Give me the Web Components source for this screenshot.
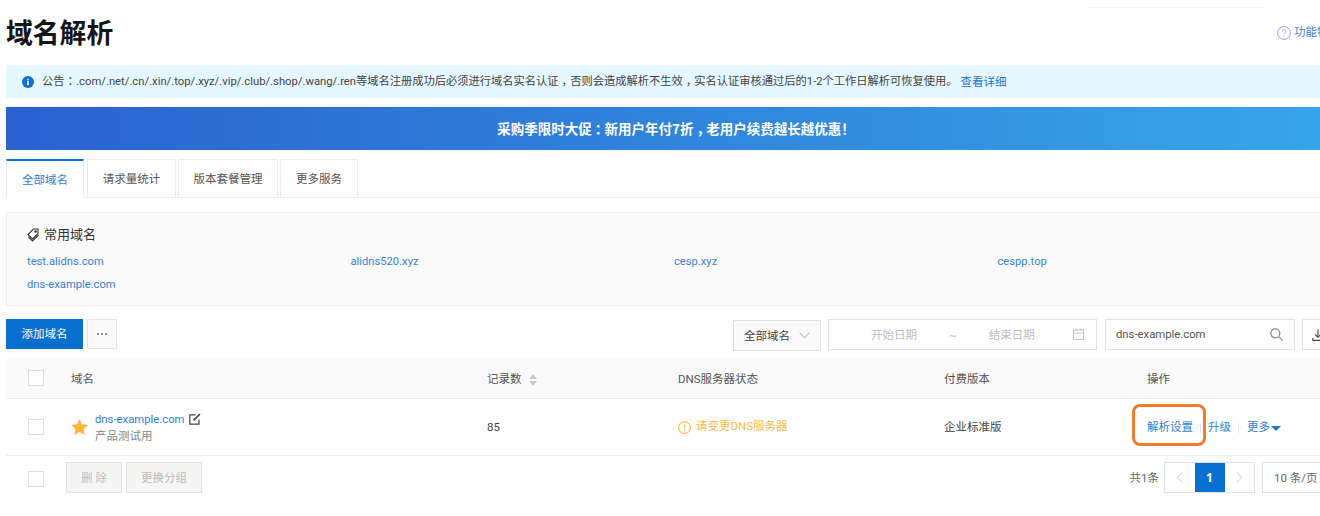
<!DOCTYPE html>
<html lang="zh"><head><meta charset="utf-8"><title>域名解析</title>
<style>
html,body{margin:0;background:#fff;overflow:hidden}
body{width:1320px;height:516px;font:11.5px/1.5 Roboto,"Noto Sans CJK SC",sans-serif;color:#333}
</style></head><body>
<dns-page>
  <page-header></page-header>
  <notice-bar></notice-bar>
  <promo-banner></promo-banner>
  <tab-bar></tab-bar>
  <fav-domains></fav-domains>
  <domain-toolbar></domain-toolbar>
  <domain-table></domain-table>
</dns-page>
<script>
const base=`:host,*{box-sizing:border-box} a{color:#2f78d0;text-decoration:none} svg{display:block;flex:none} .p{font-feature-settings:"halt";padding:0 3px}`;
function def(name,css,html){
  customElements.define(name,class extends HTMLElement{
    constructor(){super();this.attachShadow({mode:'open'}).innerHTML=`<style>${base}${css}</style>${html}`;}
  });
}
def('dns-page',`:host{display:block;width:1334px;margin-left:6px}`,`<slot></slot>`);

def('page-header',`
:host{display:block;height:65px;position:relative}
.rule{position:absolute;left:1082px;top:7px;width:175px;height:1px;background:#f5f5f5}
.row{display:flex;justify-content:space-between;padding-top:13px;height:65px}
h1{margin:0;font:700 26.8px/38px "Noto Sans CJK SC",sans-serif;color:#151515}
a{display:flex;align-items:center;gap:3px;height:40px;color:#3f7fd0;white-space:nowrap}
`,`<div class="rule"></div><div class="row"><h1>域名解析</h1>
<a href="#"><svg width="14" height="14" viewBox="0 0 14 14" fill="none" stroke="#8fa9dc"><circle cx="7" cy="7" r="6.4"/><path d="M5.3 5.5c0-2.2 3.5-2.2 3.5 0 0 1.3-1.8 1.3-1.8 2.8M7 9.6v1.2"/></svg>功能特性</a></div>`);

def('notice-bar',`
:host{display:flex;align-items:center;height:33px;background:#e5f7ff;padding:2px 0 0 16px;color:#444;white-space:nowrap;margin-bottom:9px;font-size:11.25px}
svg{margin:-2px 8px 0 0}
a{color:#1a78d0;margin-left:3px;font-size:11.5px}
`,`<svg width="12" height="12" viewBox="0 0 12 12"><circle cx="6" cy="6" r="6" fill="#0a6fd0"/><rect x="5.2" y="5" width="1.6" height="4.2" fill="#fff"/><rect x="5.2" y="2.8" width="1.6" height="1.5" fill="#fff"/></svg>
<span>公告<span class="p">：</span>.com/.net/.cn/.xin/.top/.xyz/.vip/.club/.shop/.wang/.ren等域名注册成功后必须进行域名实名认证<span class="p">，</span>否则会造成解析不生效<span class="p">，</span>实名认证审核通过后的1-2个工作日解析可恢复使用。</span><a href="#">查看详细</a>`);

def('promo-banner',`
:host{display:flex;align-items:center;justify-content:center;height:43px;margin-bottom:9px;padding:0 0 2px 6px;color:#fff;font:700 13.5px "Noto Sans CJK SC",sans-serif;background:linear-gradient(90deg,#2a62cf,#37a6e9)}
`,`<span>采购季限时大促<span class="p">：</span>新用户年付7折<span class="p">，</span>老用户续费越长越优惠！</span>`);

def('tab-bar',`
:host{display:flex;height:39px;border-bottom:1px solid #ebebeb;margin-bottom:14px;white-space:nowrap}
span{display:flex;align-items:center;justify-content:center;height:38px;padding-top:2px;border:1px solid #ebebeb;border-bottom:0;color:#555;margin-right:2px}
.on{width:78px;margin-right:3px;border-top:2px solid #0a70d2;color:#2f7dd3;height:39px;background:#fff;border-left:1px solid #ebebeb}
`,`<span class="on">全部域名</span><span style="width:89px">请求量统计</span><span style="width:100px">版本套餐管理</span><span style="width:78px">更多服务</span>`);

def('fav-domains',`
:host{display:block;height:94px;background:#fafafa;border:1px solid #f0f0f0;padding:11px 0 0 20px;margin-bottom:13px}
.t{display:flex;align-items:center;gap:5px;height:22px;font-size:13px;color:#333;margin-bottom:5px}
.g{display:grid;grid-template-columns:repeat(4,323.5px);grid-auto-rows:23px;align-items:center;font-size:11.2px}
a{color:#3a7fd2}
`,`<div class="t"><svg width="12" height="14" viewBox="0 0 12 14" fill="none" stroke="#333" stroke-width="1.1"><path d="M6.5 1H11v4.5L5.5 11 1 6.5z"/><path d="M1.2 8.6 5.5 13l6-6"/><circle cx="8.6" cy="3.4" r=".7"/></svg>常用域名</div>
<div class="g"><a href="#">test.alidns.com</a><a href="#">alidns520.xyz</a><a href="#">cesp.xyz</a><a href="#">cespp.top</a><a href="#">dns-example.com</a></div>`);

def('domain-toolbar',`
:host{display:flex;align-items:flex-start;height:39px;white-space:nowrap;padding-right:6px}
.add{width:77px;height:30px;padding-top:2px;background:#0a70d0;color:#fff;display:flex;align-items:center;justify-content:center;margin-right:4px}
.more{width:30px;height:30px;border:1px solid #e2e2e2;background:#fafafa;display:flex;align-items:center;justify-content:center;gap:2px}
.more i{width:2px;height:2px;border-radius:50%;background:#666}
.r{margin-left:auto;display:flex;gap:7px;align-items:flex-start}
.sel,.date,.q{height:31px;padding-top:2px;display:flex;align-items:center;border:1px solid #e2e2e2}
.sel svg,.date svg,.q svg{margin-top:-3px}
.sel{width:88px;margin-top:1px;background:#fafafa;justify-content:space-between;padding-left:10px;padding-right:10px;color:#444}
.date{width:269px;color:#bdbdbd;padding-left:42px;margin-right:1px}
.date span:nth-child(2){margin:0 32px 0 32px}
.date svg{margin-left:38px}
.q{width:190px;justify-content:space-between;padding-left:10px;padding-right:11px;color:#555}
.q span{font-size:11.3px}
.dl{width:32px;height:31px;border:1px solid #e2e2e2;display:flex;align-items:center;justify-content:center}
`,`<div class="add">添加域名</div><div class="more"><i></i><i></i><i></i></div>
<div class="r"><div class="sel">全部域名<svg width="11" height="7" viewBox="0 0 11 7" fill="none" stroke="#aaa"><path d="M.7.7 5.5 6 10.3.7"/></svg></div>
<div class="date"><span>开始日期</span><span>~</span><span>结束日期</span><svg width="11" height="12" viewBox="0 0 11 12" fill="none" stroke="#c4c4c4"><rect x=".5" y="2" width="10" height="9.5"/><path d="M.5 5h10M3 .5V3M8 .5V3"/></svg></div>
<div class="q"><span>dns-example.com</span><svg width="13" height="13" viewBox="0 0 13 13" fill="none" stroke="#888" stroke-width="1.2"><circle cx="5.3" cy="5.3" r="4.5"/><path d="m8.6 8.6 4 4"/></svg></div>
<div class="dl"><svg width="12" height="12" viewBox="0 0 12 12" fill="none" stroke="#444" stroke-width="1.1"><path d="M6 .5v7.5M3 5.3 6 8.3l3-3M.8 9v2.4h10.4V9"/></svg></div></div>`);

def('check-box',`:host{display:block;width:16px;height:16px;border:1px solid #dcdcdc;background:#fff}`,``);

def('domain-table',`
:host{display:block;color:#444}
.grid{display:grid;grid-template-columns:65px 416px 191px 266px 203px 193px;align-items:center}
.cb{padding-left:22px}
.head{height:41px;background:#fafafa;border-bottom:1px solid #ececf2;color:#555}
.head>div:not(.cb){padding-top:3px}
.body{height:57px;border-bottom:1px solid #ececf2}
.body>div:not(.cb):not(.warn){padding-top:2px}
.sort{display:inline-flex;flex-direction:column;gap:2px;vertical-align:middle;margin-left:7px}
.sort i{width:0;height:0;border:4.5px solid transparent}
.sort i:first-child{border-top:0;border-bottom:5px solid #c8c8c8}
.sort i:last-child{border-bottom:0;border-top:5px solid #c8c8c8}
.name{display:flex;align-items:center;gap:7px}
.name>svg{margin-top:-2px}
.nm{display:flex;align-items:center;gap:4px;height:17px;padding-top:1px}
.nm a{color:#2f7fd6;font-size:11.3px}
.sub{color:#888;line-height:17px;margin-top:-1px}
.warn{display:flex;align-items:center;gap:5px;color:#fdb94e}
.ops{position:relative;display:flex;align-items:center;color:#2f7fd6;white-space:nowrap}
.ops a{color:#2f7fd6}
.ops s{width:1px;height:10px;background:#e2e6ee;margin:0 7px}
.ops s+a+s{margin:0 8px 0 7px}
.ring{position:absolute;left:-15px;top:-13px;width:74px;height:42px;border:3px solid #ee7d31;border-radius:8px}
.caret{width:0;height:0;border:5px solid transparent;border-top:5px solid #1f76d2;border-bottom:0;margin-left:1px}
.foot{display:flex;height:51px;align-items:flex-start;padding-top:6px}
.foot .cb{width:60px;padding-top:9px}
.b{height:31px;padding-top:2px;border:1px solid #e2e2e2;background:#f5f5f5;color:#bbb;display:flex;align-items:center;justify-content:center;margin-right:4px}
.pager{margin-left:auto;display:flex;align-items:center;height:31px;color:#666}
.pager>span{padding-top:2px}
.pg{display:flex;height:31px;width:91px;margin-left:5px;border:1px solid #e2e2e2}
.pg span{flex:1;display:flex;align-items:center;justify-content:center}
.pg .cur{flex:none;width:30px;background:#0a70d0;color:#fff;font:700 12px "Open Sans",sans-serif}
.size{width:78px;height:31px;padding:2px 0 0 11px;margin-left:7px;border:1px solid #e2e2e2;display:flex;align-items:center;white-space:nowrap;overflow:hidden}
`,`<div class="grid head"><div class="cb"><check-box></check-box></div><div>域名</div><div>记录数<span class="sort"><i></i><i></i></span></div><div>DNS服务器状态</div><div>付费版本</div><div>操作</div></div>
<div class="grid body"><div class="cb"><check-box></check-box></div>
<div class="name"><svg width="17" height="16" viewBox="0 0 17 16"><path fill="#fdb42f" d="m8.5 0 2.5 5.4 5.9.7-4.4 4 1.2 5.8-5.2-2.9-5.2 2.9 1.2-5.8L.1 6.1 6 5.4z"/></svg>
<div><div class="nm"><a href="#">dns-example.com</a><svg style="margin-top:-4px" width="12" height="12" viewBox="0 0 12 12" fill="none" stroke="#444" stroke-width="1.2"><path d="M10 6.5v4.7H.8V1.8h5.6"/><path stroke-width="1.7" d="M4.6 7.4 11 1"/></svg></div><div class="sub">产品测试用</div></div></div>
<div>85</div>
<div class="warn"><svg width="13" height="13" viewBox="0 0 13 13" fill="none" stroke="#fdb94e" stroke-width="1.1"><circle cx="6.5" cy="6.5" r="5.9"/><path d="M6.5 3.2v4.2M6.5 8.7v1.3"/></svg>请变更DNS服务器</div>
<div>企业标准版</div>
<div class="ops"><div class="ring"></div><a href="#">解析设置</a><s></s><a href="#">升级</a><s></s><a href="#">更多</a><span class="caret"></span></div></div>
<div class="foot"><div class="cb"><check-box></check-box></div><div class="b" style="width:56px">删 除</div><div class="b" style="width:76px">更换分组</div>
<div class="pager"><span>共1条</span><div class="pg"><span><svg width="7" height="11" viewBox="0 0 7 11" fill="none" stroke="#c4c4c4"><path d="M6.3.6 1 5.5l5.3 4.9"/></svg></span><span class="cur">1</span><span><svg width="7" height="11" viewBox="0 0 7 11" fill="none" stroke="#c4c4c4"><path d="M.7.6 6 5.5.7 10.4"/></svg></span></div><div class="size">10 条/页</div></div></div>`);
</script>
</body></html>
